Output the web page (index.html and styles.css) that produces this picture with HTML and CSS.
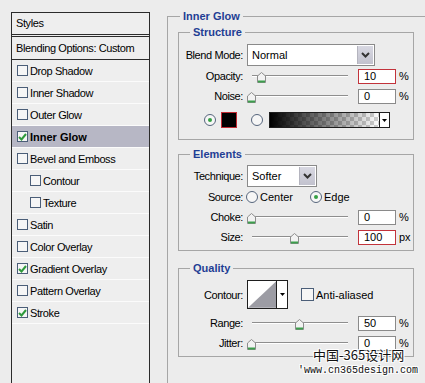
FILE: index.html
```html
<!DOCTYPE html>
<html lang="en">
<head>
  <meta charset="UTF-8">
  <title>Layer Style - Inner Glow</title>
  <link rel="stylesheet" href="styles.css">
</head>
<body>
  <div class="page">
    <div class="styles-panel">
      <div class="styles-head">Styles</div>
      <div class="styles-blend">Blending Options: Custom</div>
      <ul class="style-list">
        <li><span class="check"></span>Drop Shadow</li>
        <li><span class="check"></span>Inner Shadow</li>
        <li><span class="check"></span>Outer Glow</li>
        <li class="active"><span class="check"><svg width="9" height="8" viewBox="0 0 9 8"><path d="M1 4 L3.5 6.5 L8 1" stroke="#2f9a3c" stroke-width="2" fill="none"/></svg></span>Inner Glow</li>
        <li><span class="check"></span>Bevel and Emboss</li>
        <li class="sub"><span class="check"></span>Contour</li>
        <li class="sub"><span class="check"></span>Texture</li>
        <li><span class="check"></span>Satin</li>
        <li><span class="check"></span>Color Overlay</li>
        <li><span class="check"><svg width="9" height="8" viewBox="0 0 9 8"><path d="M1 4 L3.5 6.5 L8 1" stroke="#2f9a3c" stroke-width="2" fill="none"/></svg></span>Gradient Overlay</li>
        <li><span class="check"></span>Pattern Overlay</li>
        <li><span class="check"><svg width="9" height="8" viewBox="0 0 9 8"><path d="M1 4 L3.5 6.5 L8 1" stroke="#2f9a3c" stroke-width="2" fill="none"/></svg></span>Stroke</li>
      </ul>
    </div>

    <div class="options">
      <fieldset class="group outer">
        <legend>Inner Glow</legend>

        <fieldset class="group inner structure">
          <legend>Structure</legend>
          <div class="row tall">
            <span class="label">Blend Mode:</span>
            <div class="select blend red">
              <span class="select-text">Normal</span>
              <span class="select-btn"><svg width="9" height="6" viewBox="0 0 9 6"><path d="M1 1 L4.5 4.5 L8 1" stroke="#333" stroke-width="2" fill="none"/></svg></span>
            </div>
          </div>
          <div class="row">
            <span class="label">Opacity:</span>
            <div class="slider"><span class="track"></span><span class="thumb" style="left: 10px"><svg width="9" height="11" viewBox="0 0 9 11"><path d="M0.5 4 L4.5 0.5 L8.5 4 V10.5 H0.5 Z" fill="#f2f2f2" stroke="#8c8c8c"/><rect x="1" y="8.5" width="7" height="2" fill="#3c9e4c"/></svg></span></div>
            <span class="num red">10</span><span class="unit">%</span>
          </div>
          <div class="row">
            <span class="label">Noise:</span>
            <div class="slider"><span class="track"></span><span class="thumb" style="left: 0px"><svg width="9" height="11" viewBox="0 0 9 11"><path d="M0.5 4 L4.5 0.5 L8.5 4 V10.5 H0.5 Z" fill="#f2f2f2" stroke="#8c8c8c"/><rect x="1" y="8.5" width="7" height="2" fill="#3c9e4c"/></svg></span></div>
            <span class="num">0</span><span class="unit">%</span>
          </div>
          <div class="color-row">
            <span class="radio on"></span>
            <span class="swatch"></span>
            <span class="radio"></span>
            <span class="gradient"><span class="gradient-fill"></span><span class="gradient-btn"><svg width="5" height="3" viewBox="0 0 5 3"><path d="M0 0 H5 L2.5 3 Z" fill="#000"/></svg></span></span>
          </div>
        </fieldset>

        <fieldset class="group inner elements">
          <legend>Elements</legend>
          <div class="row tall">
            <span class="label">Technique:</span>
            <div class="select technique">
              <span class="select-text">Softer</span>
              <span class="select-btn"><svg width="9" height="6" viewBox="0 0 9 6"><path d="M1 1 L4.5 4.5 L8 1" stroke="#333" stroke-width="2" fill="none"/></svg></span>
            </div>
          </div>
          <div class="row source">
            <span class="label">Source:</span>
            <span class="radio"></span><span class="radio-text">Center</span>
            <span class="radio on"></span><span class="radio-text">Edge</span>
          </div>
          <div class="row">
            <span class="label">Choke:</span>
            <div class="slider"><span class="track"></span><span class="thumb" style="left: 0px"><svg width="9" height="11" viewBox="0 0 9 11"><path d="M0.5 4 L4.5 0.5 L8.5 4 V10.5 H0.5 Z" fill="#f2f2f2" stroke="#8c8c8c"/><rect x="1" y="8.5" width="7" height="2" fill="#3c9e4c"/></svg></span></div>
            <span class="num">0</span><span class="unit">%</span>
          </div>
          <div class="row">
            <span class="label">Size:</span>
            <div class="slider"><span class="track"></span><span class="thumb" style="left: 43px"><svg width="9" height="11" viewBox="0 0 9 11"><path d="M0.5 4 L4.5 0.5 L8.5 4 V10.5 H0.5 Z" fill="#f2f2f2" stroke="#8c8c8c"/><rect x="1" y="8.5" width="7" height="2" fill="#3c9e4c"/></svg></span></div>
            <span class="num red">100</span><span class="unit">px</span>
          </div>
        </fieldset>

        <fieldset class="group inner quality">
          <legend>Quality</legend>
          <div class="row contour-row">
            <span class="label">Contour:</span>
            <span class="contour">
              <svg class="contour-img" width="29" height="27" viewBox="0 0 29 27"><path d="M0 27 L29 0 V27 Z" fill="#9c9ca4"/></svg>
              <span class="contour-btn"><svg width="5" height="3" viewBox="0 0 5 3"><path d="M0 0 H5 L2.5 3 Z" fill="#000"/></svg></span>
            </span>
            <span class="check plain"></span><span class="check-text">Anti-aliased</span>
          </div>
          <div class="row">
            <span class="label">Range:</span>
            <div class="slider"><span class="track"></span><span class="thumb" style="left: 48px"><svg width="9" height="11" viewBox="0 0 9 11"><path d="M0.5 4 L4.5 0.5 L8.5 4 V10.5 H0.5 Z" fill="#f2f2f2" stroke="#8c8c8c"/><rect x="1" y="8.5" width="7" height="2" fill="#3c9e4c"/></svg></span></div>
            <span class="num">50</span><span class="unit">%</span>
          </div>
          <div class="row">
            <span class="label">Jitter:</span>
            <div class="slider"><span class="track"></span><span class="thumb" style="left: 0px"><svg width="9" height="11" viewBox="0 0 9 11"><path d="M0.5 4 L4.5 0.5 L8.5 4 V10.5 H0.5 Z" fill="#f2f2f2" stroke="#8c8c8c"/><rect x="1" y="8.5" width="7" height="2" fill="#3c9e4c"/></svg></span></div>
            <span class="num">0</span><span class="unit">%</span>
          </div>
        </fieldset>
      </fieldset>
    </div>
  </div>

  <div class="watermark">
    <div class="wm-cn">中国-365设计网</div>
    <div class="wm-url">'www.cn365design.com</div>
  </div>
</body>
</html>
```

FILE: styles.css
```css
body {
  margin: 0;
  height: 383px;
  overflow: hidden;
  position: relative;
  background: #ececec;
  color: #000;
  font: 11px "Liberation Sans", Arial, sans-serif;
}
.page {
  display: flex;
  align-items: flex-start;
}

/* left: styles list */
.styles-panel {
  flex: none;
  margin: 12px 0 0 11px;
  width: 137px;
  height: 371px;
  border: 1px solid #2b2b2b;
  border-bottom: 0;
  background: #eeeeee;
  letter-spacing: -0.4px;
}
.styles-head {
  height: 21px;
  line-height: 21px;
  padding-left: 4px;
  border-bottom: 3px double #2b2b2b;
}
.styles-blend {
  height: 22px;
  line-height: 22px;
  padding-left: 4px;
  border-bottom: 1px solid #2b2b2b;
}
.style-list {
  list-style: none;
  margin: 0;
  padding: 0;
}
.style-list li {
  height: 21px;
  display: flex;
  align-items: center;
  padding-left: 5px;
  border-bottom: 1px solid #fbfbfb;
}
.style-list li.sub {
  padding-left: 18px;
}
.style-list li.active {
  background: #b7b7c5;
  font-weight: bold;
  letter-spacing: 0;
}
.check {
  width: 11px;
  height: 11px;
  box-sizing: border-box;
  border: 1px solid #4b5e78;
  background: #f6f6f6;
  margin-right: 2px;
  display: flex;
  align-items: center;
  justify-content: center;
  flex: none;
}
.check.plain {
  width: 13px;
  height: 13px;
  margin: 0 2px 0 13px;
}

/* right: options */
.options {
  flex: none;
  margin: 10px 0 0 17px;
  width: 258px;
}
.group {
  margin: 0;
  padding: 0;
  min-width: 0;
  border: 1px solid #a6a6a6;
}
.group legend {
  padding: 0 3px;
  margin-left: 12px;
  line-height: 13px;
  font-weight: bold;
  color: #1f3e94;
}
.outer {
  height: 373px;
  box-sizing: border-box;
  border-right: 0;
  border-bottom: 0;
}
.inner {
  width: 236px;
  box-sizing: border-box;
  margin-left: 10px;
}
.inner legend {
  margin-left: 11px;
}
.structure {
  margin-top: 3px;
  padding: 5px 0 10px;
}
.elements {
  margin-top: 8px;
  padding: 4px 0 3px;
}
.quality {
  margin-top: 11px;
  padding: 5px 0 3px;
}

.row {
  display: flex;
  align-items: center;
  height: 20px;
}
.row.tall {
  height: 22px;
}
.label {
  width: 64px;
  flex: none;
  text-align: right;
  margin-right: 4px;
  letter-spacing: -0.4px;
}

/* sliders */
.slider {
  width: 105px;
  height: 20px;
  position: relative;
  margin-right: 6px;
  flex: none;
}
.track {
  position: absolute;
  left: 5px;
  top: 9px;
  width: 96px;
  height: 0;
  border-top: 1px solid #8e8e8e;
  border-bottom: 1px solid #fff;
}
.thumb {
  position: absolute;
  top: 6px;
  line-height: 0;
}
.num {
  width: 38px;
  height: 15px;
  box-sizing: border-box;
  border: 1px solid #8a8a8a;
  background: #fff;
  padding-left: 5px;
  line-height: 13px;
  flex: none;
}
.red {
  border-color: #c2333b;
}
.unit {
  margin-left: 3px;
}

/* selects */
.select {
  height: 22px;
  box-sizing: border-box;
  border: 1px solid #8a8a8a;
  background: #fff;
  display: flex;
  align-items: center;
  justify-content: space-between;
  padding-right: 1px;
}
.select.blend {
  width: 128px;
}
.select.technique {
  width: 70px;
}
.select-text {
  padding-left: 4px;
}
.select-btn {
  width: 15px;
  height: 18px;
  background: linear-gradient(#d8d8e2, #c2c2ce);
  border-left: 1px solid #b4b4be;
  display: flex;
  align-items: center;
  justify-content: center;
}

/* colour row */
.color-row {
  display: flex;
  align-items: center;
  height: 18px;
  margin-top: 5px;
  padding-left: 25px;
}
.radio {
  width: 12px;
  height: 12px;
  box-sizing: border-box;
  border: 1px solid #56657c;
  border-radius: 50%;
  background: #f6f6f6;
  display: flex;
  align-items: center;
  justify-content: center;
  flex: none;
}
.radio.on::after {
  content: "";
  width: 4px;
  height: 4px;
  border-radius: 50%;
  background: #36a044;
}
.swatch {
  width: 16px;
  height: 16px;
  box-sizing: border-box;
  margin: 0 14px 0 5px;
  border: 1px solid #c02a32;
  background: #000;
}
.gradient {
  width: 121px;
  height: 16px;
  box-sizing: border-box;
  margin-left: 6px;
  border: 1px solid #1e1e1e;
  display: flex;
}
.gradient-fill {
  flex: 1;
  background:
    linear-gradient(to right, #000, rgba(0, 0, 0, 0)),
    repeating-conic-gradient(#d0d0d0 0 25%, #fff 0 50%) 0 0 / 8px 8px;
}
.gradient-btn {
  width: 9px;
  border-left: 1px solid #1e1e1e;
  background: #fff;
  display: flex;
  align-items: center;
  justify-content: center;
}

/* source radios */
.source .label {
  margin-right: 3px;
}
.radio-text {
  margin: 0 17px 0 2px;
}

/* contour */
.contour-row {
  height: 29px;
}
.contour {
  width: 41px;
  height: 29px;
  box-sizing: border-box;
  border: 1px solid #1e1e1e;
  background: #fff;
  display: flex;
  align-items: flex-end;
  flex: none;
}
.contour-img {
  display: block;
}
.contour-btn {
  width: 10px;
  height: 27px;
  border-left: 1px solid #1e1e1e;
  display: flex;
  align-items: center;
  justify-content: center;
}
.contour-row + .row {
  margin-top: 4px;
}

/* watermark over the corner */
.watermark {
  position: absolute;
  left: 298px;
  top: 346px;
  text-shadow: 1px 1px 0 #fff, -1px -1px 0 #fff, 1px -1px 0 #fff, -1px 1px 0 #fff;
}
.wm-cn {
  margin-left: 15px;
  font: 13px "Noto Sans CJK SC", sans-serif;
  line-height: 18px;
  color: #111;
}
.wm-url {
  font: 10px "Liberation Mono", monospace;
  line-height: 14px;
  color: #111;
}
```
